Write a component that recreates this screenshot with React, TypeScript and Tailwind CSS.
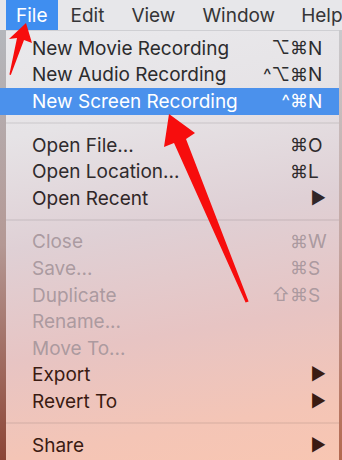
type Row =
  | { kind: "sep" }
  | { kind: "item"; label: string; mods?: string; key?: string; sub?: boolean; off?: boolean; hl?: boolean; color?: string };

const rows: Row[] = [
  { kind: "item", label: "New Movie Recording", mods: "⌥⌘", key: "N", color: "text-[#2c2c2e]" },
  { kind: "item", label: "New Audio Recording", mods: "^⌥⌘", key: "N", color: "text-[#2c2c2e]" },
  { kind: "item", label: "New Screen Recording", mods: "^⌘", key: "N", hl: true },
  { kind: "sep" },
  { kind: "item", label: "Open File...", mods: "⌘", key: "O", color: "text-[#2f2b2d]" },
  { kind: "item", label: "Open Location...", mods: "⌘", key: "L", color: "text-[#2f2b2d]" },
  { kind: "item", label: "Open Recent", sub: true, color: "text-[#302628]" },
  { kind: "sep" },
  { kind: "item", label: "Close", mods: "⌘", key: "W", off: true },
  { kind: "item", label: "Save...", mods: "⌘", key: "S", off: true },
  { kind: "item", label: "Duplicate", mods: "⇧⌘", key: "S", off: true },
  { kind: "item", label: "Rename...", off: true },
  { kind: "item", label: "Move To...", off: true },
  { kind: "item", label: "Export", sub: true, color: "text-[#3a1b12]" },
  { kind: "item", label: "Revert To", sub: true, color: "text-[#3a1b12]" },
  { kind: "sep" },
  { kind: "item", label: "Share", sub: true, color: "text-[#3a1b12]" },
];

const Arrows = () => (
  <svg className="absolute inset-0 pointer-events-none" width="342" height="460" viewBox="0 0 342 460">
    {/* big arrow pointing at New Screen Recording */}
    <polygon
      fill="#f70d0d"
      points="169,114 195,133 186,139 248.6,301.5 245.6,302.6 174,143 164,147"
    />
    {/* small arrow pointing at File */}
    <polygon fill="#f70d0d" points="26,23 32,43 24,40 10.8,75 9.4,74.5 17,38 9,39" />
  </svg>
);

export default function App() {
  return (
    <div className="relative w-[342px] h-[460px] overflow-hidden font-['Inter','DejaVu_Sans',sans-serif] text-[19px] leading-none">
      <div className="h-[30px] flex items-center bg-[#e7e7ea] text-[#353537]">
        <div className="ml-[6px] h-full px-[10px] flex items-center bg-[#3f8ef0] text-white">File</div>
        <span className="ml-[13px]">Edit</span>
        <span className="ml-[27px]">View</span>
        <span className="ml-[27px]">Window</span>
        <span className="ml-[26px]">Help</span>
      </div>
      <div className="flex h-[430px]">
        <div className="w-[6px] bg-gradient-to-b from-[#b4b7bc] via-[#b49894] to-[#8c4536]" />
        <div className="flex-1 flex flex-col pt-[4px] border-t border-[#cfcfd3] bg-[linear-gradient(170deg,#e9e9ec_0%,#e6e3e6_22%,#dfd0d5_45%,#e7c4c3_68%,#f4c5b6_88%,#f8c6b2_100%)]">
          {rows.map((r, i) =>
            r.kind === "sep" ? (
              <div key={i} className="h-[17px] flex items-center">
                <div className="w-full h-[2px] bg-[#000]/[0.06]" />
              </div>
            ) : (
              <div
                key={i}
                className={`h-[26.6px] flex items-center pl-[26px] pr-[13px] ${
                  r.hl ? "bg-[#4b91ec] text-white -ml-[6px] pl-[32px]" : r.off ? "text-[#a4949a]/90" : r.color
                }`}
              >
                <span className="flex-1">{r.label}</span>
                {r.sub ? (
                  <span className="text-[17px] mr-[0px]">▶</span>
                ) : r.key ? (
                  <span className="flex items-center">
                    <span className="text-[18px]">{r.mods}</span>
                    <span className="w-[18px] text-left">{r.key}</span>
                  </span>
                ) : null}
              </div>
            )
          )}
        </div>
        <div className="w-[3px] bg-gradient-to-b from-[#c9c9cc] via-[#c4a6a2] to-[#b3684f]" />
      </div>
      <Arrows />
    </div>
  );
}
